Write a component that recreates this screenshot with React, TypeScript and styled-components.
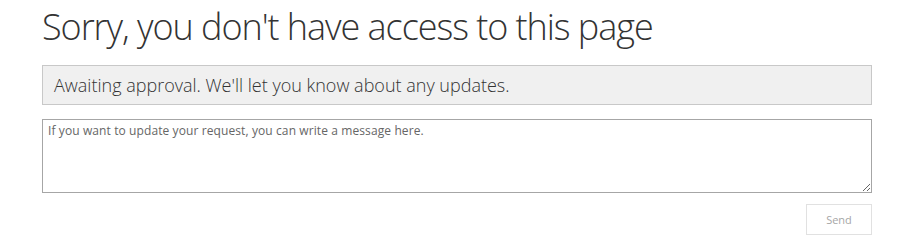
import React from "react";
import styled, { createGlobalStyle } from "styled-components";

const Global = createGlobalStyle`
  html, body { margin: 0; padding: 0; background: #fff; }
  body { font-family: "Open Sans", "Noto Sans", sans-serif; }
`;

const Page = styled.main`
  width: 830px;
  padding: 0 0 0 42px;
  display: flex;
  flex-direction: column;
`;

const Title = styled.h1`
  margin: 3px 0 0 0;
  font-size: 36px;
  font-weight: 300;
  line-height: 48px;
  color: #333;
  letter-spacing: -1.05px;
`;

const Status = styled.div`
  margin-top: 14px;
  height: 40px;
  box-sizing: border-box;
  background: #f0f0f0;
  border: 1px solid #c8c8c8;
  display: flex;
  align-items: center;
  padding: 0 11px;
  font-size: 18px;
  font-weight: 300;
  color: #333;
`;

const Message = styled.textarea`
  margin-top: 14px;
  height: 74px;
  box-sizing: border-box;
  width: 100%;
  border: 1px solid #a6a6a6;
  padding: 2px 5px;
  font-family: "Open Sans", "Noto Sans", sans-serif;
  font-size: 12px;
  letter-spacing: 0.1px;
  color: #333;
  resize: vertical;
  outline: none;
  &::placeholder { color: #666; opacity: 1; }
`;

const Actions = styled.div`
  display: flex;
  justify-content: flex-end;
  margin-top: 11px;
`;

const SendButton = styled.button`
  width: 66px;
  height: 31px;
  box-sizing: border-box;
  background: #fff;
  border: 1px solid #e1e1e1;
  color: #a6a6a6;
  font-family: "Open Sans", "Noto Sans", sans-serif;
  font-size: 11px;
  cursor: default;
`;

export default function App() {
  return (
    <>
      <Global />
      <Page>
        <Title>Sorry, you don't have access to this page</Title>
        <Status>Awaiting approval. We'll let you know about any updates.</Status>
        <Message placeholder="If you want to update your request, you can write a message here." />
        <Actions>
          <SendButton disabled>Send</SendButton>
        </Actions>
      </Page>
    </>
  );
}
